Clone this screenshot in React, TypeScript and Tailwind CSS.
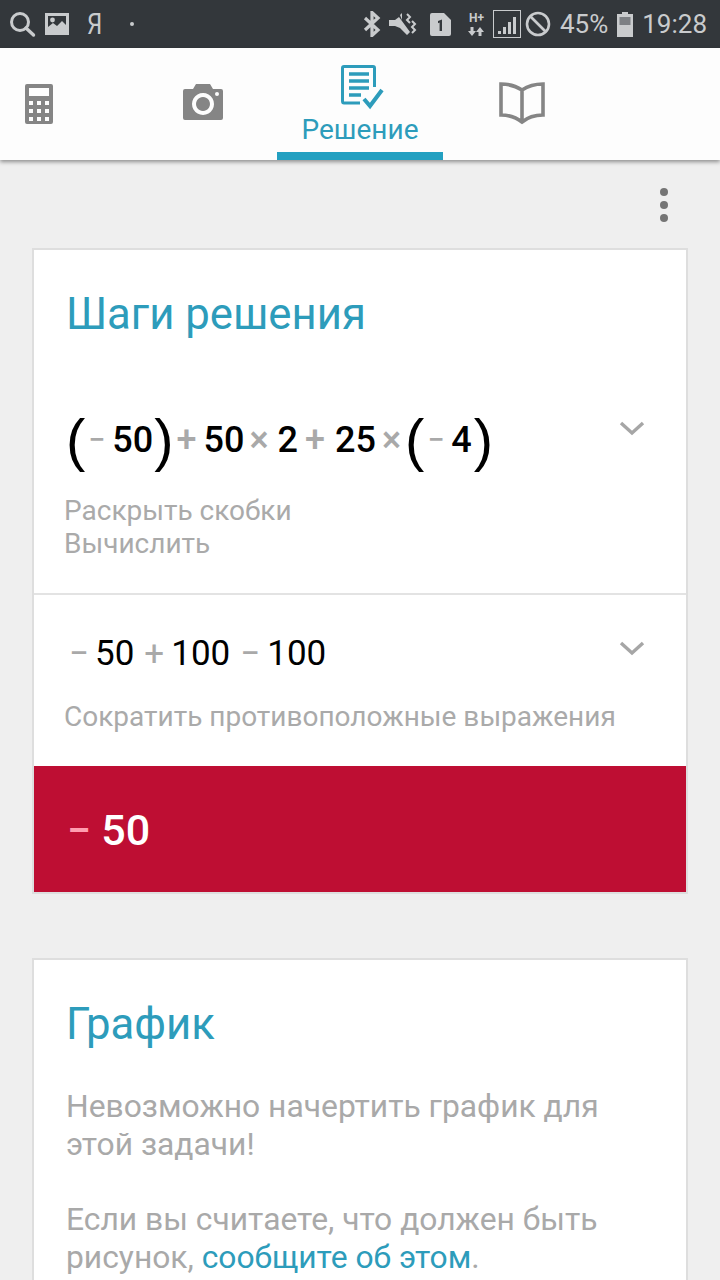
import React from 'react';

const font = { fontFamily: 'Roboto, sans-serif' };

function Op({ children, className = '' }: { children: React.ReactNode; className?: string }) {
  return <span className={`text-[#a9a9a9] ${className}`}>{children}</span>;
}

function Paren({ children, className = '' }: { children: string; className?: string }) {
  return <span className={`text-[58px] font-normal leading-[52px] text-black [font-family:'Liberation_Sans',sans-serif] ${className}`}>{children}</span>;
}

function Chevron() {
  return (
    <svg width="26" height="16" viewBox="0 0 26 16" className="shrink-0">
      <path d="M2 3 L13 13 L24 3" fill="none" stroke="#a6a6a6" strokeWidth="3.4" />
    </svg>
  );
}

function StatusBar() {
  return (
    <div className="flex h-12 items-center bg-[#33373b] text-[#c9cbcd]">
      <svg width="28" height="28" viewBox="0 0 28 28" className="ml-2">
        <circle cx="12" cy="12" r="8.5" fill="none" stroke="#c9cbcd" strokeWidth="3" />
        <path d="M18 18 L25.5 25" stroke="#c9cbcd" strokeWidth="3.4" strokeLinecap="round" />
      </svg>
      <svg width="24" height="22" viewBox="0 0 24 22" className="ml-[9px]">
        <path fillRule="evenodd" fill="#c9cbcd" d="M0 0H24V22H0Z M3 3V14L8 10L12 13L17 8L21 12V3Z" />
        <circle cx="7.5" cy="7" r="2.4" fill="#c9cbcd" />
      </svg>
      <span className="ml-[16px] scale-x-[.8] text-[30px] font-normal leading-none" style={font}>Я</span>
      <span className="ml-[26px] h-1 w-1 rounded-full bg-[#c9cbcd]" />
      <div className="ml-auto flex items-center">
        <svg width="18" height="26" viewBox="0 0 18 26">
          <path d="M2 7 L15 19 L9 24.5 V1.5 L15 7 L2 19" fill="none" stroke="#c9cbcd" strokeWidth="3.2" />
        </svg>
        <svg width="28" height="24" viewBox="0 0 28 24" className="ml-[8px]">
          <path fill="#c9cbcd" d="M0 8H6L10 5L21 20L18 23L11 16L6 14H0Z M11 3L13 1V8Z" />
          <path d="M18 2 L21 5 L18 8 L21 11 M23 9 L26 12 L23 15 L26 18 L23 21" fill="none" stroke="#c9cbcd" strokeWidth="2" />
        </svg>
        <svg width="21" height="23" viewBox="0 0 21 23" className="ml-[13px]">
          <path fill="#c9cbcd" d="M2 0H14L21 7V21Q21 23 19 23H2Q0 23 0 21V2Q0 0 2 0Z" />
          <path fill="#33373b" d="M8 8L12 6.500V18H9.600V9.600L8 10.200Z" />
        </svg>
        <div className="ml-[17px] flex w-[17px] flex-col items-center" style={font}>
          <span className="text-[12px] font-bold leading-[12px]">H+</span>
          <svg width="16" height="9" viewBox="0 0 16 9" className="mt-[3px]">
            <path fill="#c9cbcd" d="M2.500 0H5.500V4H8L4 9L0 4H2.500Z M10.500 9H13.500V5H16L12 0L8 5H10.500Z" />
          </svg>
        </div>
        <div className="ml-[8px] flex h-[28px] w-[28px] items-end gap-[2px] border-[1.5px] border-[#c9cbcd] p-[3px] pl-[4px]">
          <span className="h-[3px] w-[3px] bg-[#c9cbcd]" />
          <span className="h-[7px] w-[3px] bg-[#c9cbcd]" />
          <span className="h-[12px] w-[3px] bg-[#c9cbcd]" />
          <span className="h-[17px] w-[3px] bg-[#c9cbcd]" />
        </div>
        <svg width="26" height="26" viewBox="0 0 26 26" className="ml-[4px]">
          <circle cx="13" cy="13" r="11" fill="none" stroke="#c9cbcd" strokeWidth="2.6" />
          <path d="M5 5 L21 21" stroke="#c9cbcd" strokeWidth="2.6" />
        </svg>
        <span className="ml-[9px] text-[26px] leading-none" style={font}>45%</span>
        <svg width="16" height="25" viewBox="0 0 16 25" className="ml-[9px]">
          <path fill="#c9cbcd" d="M5 0H11V2H16V25H0V2H5Z" />
          <rect x="2.500" y="5" width="11" height="8" fill="#7d8084" />
        </svg>
        <span className="ml-[9px] mr-[13px] text-[26px] leading-none" style={font}>19:28</span>
      </div>
    </div>
  );
}

function Tabs() {
  return (
    <div className="relative z-10 flex h-28 bg-[#fdfdfd] shadow-[0_2px_4px_rgba(0,0,0,0.4)]">
      <div className="flex w-[78px] items-start justify-center pt-[36px]">
        <svg width="28" height="40" viewBox="0 0 28 40">
          <path fillRule="evenodd" fill="#858585" d="M2 0H26Q28 0 28 2V38Q28 40 26 40H2Q0 40 0 38V2Q0 0 2 0Z M4 4V12H24V4Z M4 17V21H8V17Z M12 17V21H16V17Z M20 17V21H24V17Z M4 25V29H8V25Z M12 25V29H16V25Z M20 25V29H24V25Z M4 33V37H8V33Z M12 33V37H16V33Z M20 33V37H24V33Z" />
        </svg>
      </div>
      <div className="flex w-[199px] items-start justify-end pr-[54px] pt-[36px]">
        <svg width="40" height="36" viewBox="0 0 40 36">
          <path fillRule="evenodd" fill="#858585" d="M2 5H10L13 0H27L30 5H38Q40 5 40 7V34Q40 36 38 36H2Q0 36 0 34V7Q0 5 2 5Z M20 9A11 11 0 1 0 20.010 9Z M20 13A7 7 0 1 1 19.990 13Z" />
          <circle cx="34" cy="10" r="2" fill="#fdfdfd" />
        </svg>
      </div>
      <div className="flex w-[166px] flex-col items-center">
        <svg width="44" height="46" viewBox="0 0 44 46" className="mt-[17px] ml-[6px]">
          <path d="M19 38H3Q1.500 38 1.500 36V3Q1.500 1.500 3 1.500H32Q33.500 1.500 33.500 3V22" fill="none" stroke="#2d9cbb" strokeWidth="3" />
          <path d="M8 9H28 M8 16H28 M8 23H28 M8 30H20" stroke="#2d9cbb" strokeWidth="3.4" />
          <path d="M23 34 L29 41 L41 25" fill="none" stroke="#2d9cbb" strokeWidth="4" />
        </svg>
        <span className="mt-[4px] text-[28px] leading-[30px] text-[#2d9cbb]" style={font}>Решение</span>
        <div className="mt-auto h-2 w-full bg-[#23a0c1]" />
      </div>
      <div className="flex w-[158px] items-start justify-center pt-[33px]">
        <svg width="46" height="44" viewBox="0 0 46 44">
          <path d="M23 9 C17 5 9 3 2 3 V34 C9 34 17 36 23 41 C29 36 37 34 44 34 V3 C37 3 29 5 23 9 Z M23 9 V41" fill="none" stroke="#858585" strokeWidth="3.600" />
        </svg>
      </div>
    </div>
  );
}

export default function App() {
  return (
    <div className="h-[1280px] w-[720px] overflow-hidden bg-[#efefef]" style={font}>
      <StatusBar />
      <Tabs />
      <div className="flex h-[88px] justify-end pt-[28px] pr-[52px]">
        <div className="flex flex-col gap-[5px]">
          <span className="h-2 w-2 rounded-full bg-[#757575]" />
          <span className="h-2 w-2 rounded-full bg-[#757575]" />
          <span className="h-2 w-2 rounded-full bg-[#757575]" />
        </div>
      </div>

      <div className="mx-[32px] border-2 border-[#dedede] bg-white">
        <h2 className="pl-[32px] pt-[39px] text-[43.7px] font-normal leading-[50px] text-[#2d9cbb]">Шаги решения</h2>
        <div className="flex items-start justify-between pl-[32px] pr-[41px] pt-[75px]">
          <div className="flex items-center text-[36px] font-medium leading-[52px] text-black">
            <Paren>(</Paren>
            <Op className="ml-[3px] text-[30px]">−</Op>
            <span className="ml-[7px]">50</span>
            <Paren className="ml-[1px]">)</Paren>
            <Op className="ml-[3px]">+</Op>
            <span className="ml-[7px]">50</span>
            <Op className="ml-[5px]">×</Op>
            <span className="ml-[9px]">2</span>
            <Op className="ml-[7px]">+</Op>
            <span className="ml-[10px]">25</span>
            <Op className="ml-[6px]">×</Op>
            <Paren className="ml-[4px]">(</Paren>
            <Op className="ml-[3px] text-[30px]">−</Op>
            <span className="ml-[7px]">4</span>
            <Paren className="ml-[2px]">)</Paren>
          </div>
          <div className="pt-[6px]"><Chevron /></div>
        </div>
        <p className="pl-[30px] pt-[28px] pb-[33px] text-[28px] leading-[33px] text-[#aaaaaa]">
          Раскрыть скобки
          <br />
          Вычислить
        </p>
        <div className="border-t-2 border-[#e3e3e3]">
          <div className="flex items-start justify-between pl-[35px] pr-[41px] pt-[36px]">
            <div className="flex text-[35px] leading-[46px] text-black">
              <Op>−</Op>
              <span className="ml-[6px]">50</span>
              <Op className="ml-[10px]">+</Op>
              <span className="ml-[7px]">100</span>
              <Op className="ml-[10px]">−</Op>
              <span className="ml-[7px]">100</span>
            </div>
            <div className="pt-[9px]"><Chevron /></div>
          </div>
          <p className="pl-[30px] pt-[23px] pb-[33px] text-[28px] leading-[33px] text-[#aaaaaa]">Сократить противоположные выражения</p>
        </div>
        <div className="flex h-[126px] items-center bg-[#be0e33] pl-[33px] pt-[2px] text-[43px] font-medium text-white">
          <span className="text-[#ff9db0]">−</span>
          <span className="ml-[10px]">50</span>
        </div>
      </div>

      <div className="mx-[32px] mt-[64px] border-2 border-[#dedede] bg-white pl-[32px] pr-[60px]">
        <h2 className="pt-[39px] text-[43.7px] font-normal leading-[50px] text-[#2d9cbb]">График</h2>
        <p className="pt-[38px] text-[31.8px] leading-[38px] text-[#a9a9a9]">Невозможно начертить график для этой задачи!</p>
        <p className="pt-[37px] pb-8 text-[31.8px] leading-[38px] text-[#a9a9a9]">
          Если вы считаете, что должен быть рисунок, <span className="text-[#2d9cbb]">сообщите об этом</span>.
        </p>
      </div>
    </div>
  );
}
